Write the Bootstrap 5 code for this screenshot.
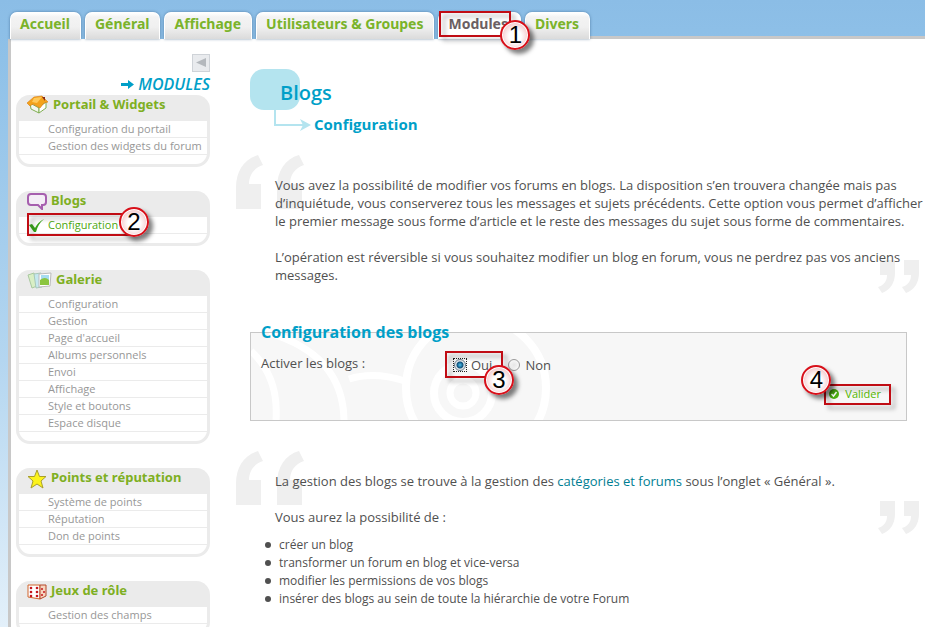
<!DOCTYPE html>
<html lang="fr">
<head>
<meta charset="utf-8">
<meta name="viewport" content="width=device-width, initial-scale=1">
<title>Panneau d'administration – Blogs</title>
<link href="https://cdn.jsdelivr.net/npm/bootstrap@5.3.0/dist/css/bootstrap.min.css" rel="stylesheet">
<script src="https://cdn.jsdelivr.net/npm/bootstrap@5.3.0/dist/js/bootstrap.bundle.min.js" defer></script>
<style>
body{font-family:"Open Sans","Noto Sans",sans-serif;font-size:12px;line-height:18px;color:#505050;background:linear-gradient(#8bbde6 0,#8fc1e8 60px,#b4d6f0 360px,#e3f0fa 627px) no-repeat #e3f0fa;overflow:hidden;height:100vh}
a{text-decoration:none}
.tabs-row{gap:4px;padding-left:10px}
.tab-item{position:relative}
.tab-link{display:block;height:27px;padding:0 10px 0 9px;border-radius:7px 7px 0 0;background:linear-gradient(#fff 0,#f3f3f3 4px,#f0f0f0 14px,#d9d9d9 27px);border:1px solid #fff;border-bottom:0;box-shadow:0 0 3px rgba(40,80,120,.6);font-family:"Noto Sans",sans-serif;font-weight:700;font-size:14px;line-height:22px;color:#7ab32a;white-space:nowrap}
.tab-link.current{background:#fff;color:#6b5f63;padding-right:12px}
.tabs-end{border-bottom:3px solid #c8c8c8}
.sheet{background:#fff;margin-left:8px;border-left:3px solid #c8c8c8;padding-left:5px}
.side{width:194px;flex:none;padding-top:15px}
.fold{width:18px;height:18px;border:1px solid #cfd3d8;background:#e9ebee}
.side-title{font-size:16px;line-height:18px;font-weight:600;font-style:italic;color:#009fc8;margin:3px 0 2px}
.menu-box{background:#ebebeb;border:3px solid #ebebeb;border-top:0;border-radius:14px;margin-bottom:24px}
.menu-head{height:26px;padding-left:8px;font-family:"Noto Sans",sans-serif;font-size:13px;line-height:18px;font-weight:700;color:#7eaf22;gap:4px;margin:0}
.menu-body{background:#fff;border-radius:0 0 11px 11px;padding-bottom:9px}
.menu-body li{height:17px;border-bottom:1px solid #ebebeb;padding-left:29px;font-size:11px;line-height:16px;position:relative;white-space:nowrap}
.menu-body a{color:#979797}
.menu-body .active-link{color:#4da70e}
.tick{position:absolute;left:10px;top:2px}
.content{padding:30px 0 0 40px;min-width:0}
.title-block{position:relative;height:86px}
.title-block svg{position:absolute;left:0;top:0}
.title-block h1{position:relative;margin:0;padding:10px 0 0 30px;font-size:20px;line-height:27px;font-weight:600;color:#009fc8}
.title-block h2{position:relative;margin:0;padding:8px 0 0 64px;font-size:15px;line-height:20px;font-weight:700;color:#009fc8}
.quoted{position:relative;padding:21px 0 0 25px}
.quoted p{position:relative;margin:0 0 18px;font-size:13px}
.quoted.second{margin-top:30px}
.q-open{position:absolute;left:-14px;top:0}
.q-close{position:absolute;right:5px;top:105px}
.q-close.low{top:50px}
.quoted .teal{color:#007e92}
.dots{list-style:none;margin:-8px 0 0 -10px;padding:0;position:relative}
.dots li{display:flex;align-items:center;gap:8px}
.dots li::before{content:"";width:6px;height:6px;border-radius:3px;background:#505050}
.panel{position:relative;border:1px solid #c8c8c8;background:#f7f7f7;height:89px;margin:48px 18px 0 0;padding:0 25px 0 10px}
.panel legend{float:none;width:auto;position:absolute;left:10px;top:-12px;margin:0;font-size:16px;line-height:22px;font-weight:700;color:#009fc8}
.rings{position:absolute;left:0;top:0}
.q-row{position:relative;padding-top:20px;font-size:13px}
.q-row .name{width:193px;line-height:20px}
.q-row label{line-height:24px}
.q-row input{appearance:none;width:12px;height:12px;margin:0 5px 0 0;border:1px solid #9a9a9a;border-radius:6px;background:radial-gradient(#e6e6e6,#fff)}
.q-row input:checked{border-color:#6d7f8d;background:radial-gradient(circle at 50% 50%,#4ac3ee 0,#10507c 3px,#dfe6ea 4px)}
.q-row .focus-dots{position:absolute;left:-1px;top:5px;width:14px;height:14px;border:1px dotted #222}
.ok-btn{border:0;background:none;padding:0;color:#55b800;font-size:11px;line-height:18px;gap:6px;position:relative}
.frame{position:absolute;border:2px solid #c00c14;filter:drop-shadow(4px 4px 2px rgba(0,0,0,.3));pointer-events:none}
.step{position:absolute;z-index:3;width:30px;height:30px;border:2px solid #d8101a;border-radius:15px;background:radial-gradient(circle at 50% 55%,#fff 0,#fff 6px,#f5cfd1 13px);box-shadow:4px 4px 4px rgba(0,0,0,.5),inset 0 0 0 1px #fff;font-family:"Liberation Sans",sans-serif;font-size:24px;line-height:26px;font-weight:400;color:#000;text-align:center}
.f1{left:1px;top:-1px;width:72px;height:26px}.s1{left:62px;top:8px}
.f2{left:8px;top:-4px;width:106px;height:23px}.s2{left:100px;top:-10px}
.f3{left:-9px;top:-2px;width:58px;height:27px}.s3{left:30px;top:12px}
.f4{left:-5px;top:-1px;width:67px;height:21px}.s4{left:-28px;top:-20px}
</style>
</head>
<body>
<svg width="0" height="0" class="position-absolute" aria-hidden="true">
<defs>
<symbol id="qo" viewBox="0 0 68 54"><path fill="#efefef" d="M22 0C8 4 0 16 0 33v21h25V29H13c0-9 5-16 14-19zM63 0C49 4 41 16 41 33v21h25V29H54c0-9 5-16 14-19z"/></symbol>
<symbol id="qc" viewBox="0 0 42 33"><path fill="#efefef" d="M2 0h15v13c0 10-5 17-13 20l-4-6c6-2 9-6 9-12H2zM26 0h15v13c0 10-5 17-13 20l-4-6c6-2 9-6 9-12h-7z"/></symbol>
</defs>
</svg>
<header class="pt-2">
<nav class="d-flex pt-1">
<ul class="tabs-row d-flex list-unstyled m-0">
<li class="tab-item"><a class="tab-link" href="#">Accueil</a></li>
<li class="tab-item"><a class="tab-link" href="#">Général</a></li>
<li class="tab-item"><a class="tab-link" href="#">Affichage</a></li>
<li class="tab-item"><a class="tab-link" href="#">Utilisateurs &amp; Groupes</a></li>
<li class="tab-item"><a class="tab-link current" href="#">Modules</a><span class="frame f1"></span><span class="step s1">1</span></li>
<li class="tab-item"><a class="tab-link" href="#">Divers</a></li>
</ul>
<div class="tabs-end flex-grow-1"></div>
</nav>
</header>
<div class="sheet d-flex">
<aside class="side">
<div class="d-flex justify-content-end"><button class="fold p-0 d-flex align-items-center justify-content-center" type="button" aria-label="Réduire le menu"><svg width="10" height="10" viewBox="0 0 10 10"><path d="M10 0v9L0 4.500z" fill="#b4b8bd"/></svg></button></div>
<div class="side-title d-flex justify-content-end align-items-center gap-1"><svg width="13" height="9" viewBox="0 0 13 9"><path d="M0 3h7V0l6 4.500L7 9V6H0z" fill="#009fc8"/></svg>MODULES</div>
<section class="menu-box">
<h3 class="menu-head d-flex"><svg width="22" height="19" viewBox="0 0 22 19"><path d="M3 8l9 5v5l-8-4z" fill="#f4f7ee" stroke="#7fae51"/><path d="M12 12l7-5v6l-7 5z" fill="#fff" stroke="#7fae51"/><path d="M0 8l7-6 8-1 6 6-4 1-4 5-7-4-3 2z" fill="#f4a31b" stroke="#d97b13" stroke-width=".6"/><path d="M7 3l8-1-5 6-5-1z" fill="#ffc95a"/><path d="M15 2l3 0v4z" fill="#8b2c12"/></svg>Portail &amp; Widgets</h3>
<ul class="menu-body list-unstyled m-0"><li><a href="#">Configuration du portail</a></li><li><a href="#">Gestion des widgets du forum</a></li></ul>
</section>
<section class="menu-box">
<h3 class="menu-head d-flex"><svg width="20" height="19" viewBox="0 0 20 19"><path d="M4 3h12q3 0 3 3v5q0 3-3 3h-1v4l-4-4H4q-3 0-3-3V6q0-3 3-3z" fill="#f4eef6" stroke="#a65fae" stroke-width="2"/></svg>Blogs</h3>
<ul class="menu-body list-unstyled m-0"><li><svg class="tick" width="15" height="13" viewBox="0 0 15 13"><path d="M0 6l3-1 3 4Q9 3 15 0 9 5 7 13H5z" fill="#3aa51c"/></svg><a class="active-link" href="#">Configuration</a><span class="frame f2"></span><span class="step s2">2</span></li></ul>
</section>
<section class="menu-box">
<h3 class="menu-head d-flex"><svg width="25" height="19" viewBox="0 0 25 19"><path d="M1 5l6-2 3 13-5 2z" fill="#d9efc5" stroke="#a9c8a0"/><path d="M7 4l7-1 1 14-6 1z" fill="#c5e8ef" stroke="#a9c8b8"/><path d="M12 4l12-1-1 13-11 1z" fill="#fff" stroke="#bbb"/><path d="M14 5h8v5h-8z" fill="#a7dcf0"/><path d="M13 10q5-4 9 0v5h-9z" fill="#8bc53f"/></svg>Galerie</h3>
<ul class="menu-body list-unstyled m-0"><li><a href="#">Configuration</a></li><li><a href="#">Gestion</a></li><li><a href="#">Page d'accueil</a></li><li><a href="#">Albums personnels</a></li><li><a href="#">Envoi</a></li><li><a href="#">Affichage</a></li><li><a href="#">Style et boutons</a></li><li><a href="#">Espace disque</a></li></ul>
</section>
<section class="menu-box">
<h3 class="menu-head d-flex"><svg width="20" height="21" viewBox="0 0 20 21"><path d="M10 2l2.500 6.500H19l-5 4.500 2 7-6-4-6 4 2-7-5-4.500h6.500z" fill="#fcf31c" stroke="#a9a02c"/></svg>Points et réputation</h3>
<ul class="menu-body list-unstyled m-0"><li><a href="#">Système de points</a></li><li><a href="#">Réputation</a></li><li><a href="#">Don de points</a></li></ul>
</section>
<section class="menu-box mb-0">
<h3 class="menu-head d-flex"><svg width="20" height="20" viewBox="0 0 20 20"><path d="M1 4h12v14l-12-2z" fill="#fff" stroke="#d0642c"/><path d="M13 4l6 0v11l-6 3z" fill="#f6d5c0" stroke="#b4482a"/><g fill="#c5161d"><circle cx="4" cy="7" r="1.300"/><circle cx="10" cy="7" r="1.300"/><circle cx="4" cy="11" r="1.300"/><circle cx="10" cy="11" r="1.300"/><circle cx="4" cy="15" r="1.300"/><circle cx="10" cy="15" r="1.300"/><circle cx="15" cy="8" r="1"/><circle cx="17" cy="11" r="1"/><circle cx="15" cy="14" r="1"/></g></svg>Jeux de rôle</h3>
<ul class="menu-body list-unstyled m-0"><li><a href="#">Gestion des champs</a></li></ul>
</section>
</aside>
<main class="content flex-grow-1">
<div class="title-block">
<svg width="62" height="64" viewBox="0 0 62 64"><rect width="50" height="41" rx="14" fill="#b4e4ef"/><path d="M25 41v15h30" fill="none" stroke="#b4e4ef" stroke-width="2"/><path d="M50 50l11 6-11 6 3-6z" fill="#b4e4ef"/></svg>
<h1>Blogs</h1>
<h2>Configuration</h2>
</div>
<section class="quoted">
<svg class="q-open" width="68" height="54"><use href="#qo"/></svg>
<svg class="q-close" width="42" height="33"><use href="#qc"/></svg>
<p>Vous avez la possibilité de modifier vos forums en blogs. La disposition s’en trouvera changée mais pas d’inquiétude, vous conserverez tous les messages et sujets précédents. Cette option vous permet d’afficher le premier message sous forme d’article et le reste des messages du sujet sous forme de commentaires.</p>
<p>L’opération est réversible si vous souhaitez modifier un blog en forum, vous ne perdrez pas vos anciens messages.</p>
</section>
<form>
<fieldset class="panel">
<svg class="rings" width="310" height="87" viewBox="0 0 310 87" fill="none" stroke="#fff"><circle cx="212" cy="60" r="13" stroke-width="7"/><circle cx="212" cy="60" r="29" stroke-width="8"/><circle cx="225" cy="55" r="70" stroke-width="8"/><path d="M0 18q28 26 25 69M18 0q74 22 75 87M98 46q25-8 56 2" stroke-width="7"/></svg>
<legend>Configuration des blogs</legend>
<div class="q-row d-flex">
<span class="name" id="q1">Activer les blogs :</span>
<div class="d-flex gap-3" role="radiogroup" aria-labelledby="q1">
<label class="d-flex align-items-center position-relative"><input type="radio" name="blogs" checked>Oui<span class="focus-dots"></span><span class="frame f3"></span><span class="step s3">3</span></label>
<label class="d-flex align-items-center"><input type="radio" name="blogs">Non</label>
</div>
</div>
<div class="d-flex justify-content-end pt-2"><button class="ok-btn d-flex align-items-center" type="button"><svg width="10" height="10" viewBox="0 0 10 10"><circle cx="5" cy="5" r="5" fill="#4caf12"/><path d="M2.500 5l2 2 3-4" stroke="#fff" stroke-width="1.500" fill="none"/></svg>Valider<span class="frame f4"></span><span class="step s4">4</span></button></div>
</fieldset>
</form>
<section class="quoted second">
<svg class="q-open" width="68" height="54"><use href="#qo"/></svg>
<svg class="q-close low" width="42" height="33"><use href="#qc"/></svg>
<p>La gestion des blogs se trouve à la gestion des <a class="teal" href="#">catégories et forums</a> sous l’onglet « Général ».</p>
<p>Vous aurez la possibilité de :</p>
<ul class="dots"><li>créer un blog</li><li>transformer un forum en blog et vice-versa</li><li>modifier les permissions de vos blogs</li><li>insérer des blogs au sein de toute la hiérarchie de votre Forum</li></ul>
</section>
</main>
</div>
</body>
</html>
